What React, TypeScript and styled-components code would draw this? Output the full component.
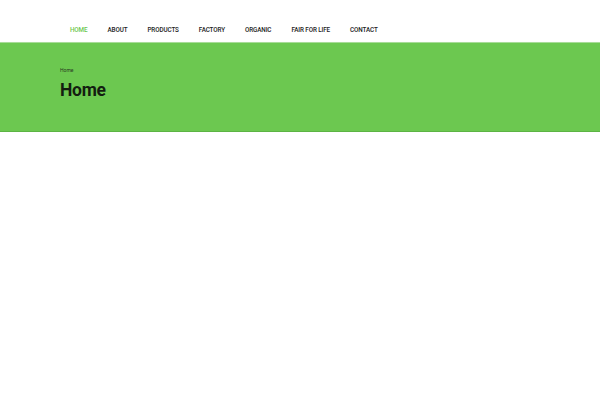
import styled, { createGlobalStyle } from "styled-components";

const GlobalStyle = createGlobalStyle`
  body {
    margin: 0;
    background: #ffffff;
    font-family: Roboto, "DejaVu Sans", sans-serif;
  }
`;

const Header = styled.header`
  height: 42px;
  background: #ffffff;
  display: flex;
  align-items: center;
  padding: 18px 0 0 70px;
  box-sizing: border-box;
`;

const NavMenu = styled.ul`
  display: flex;
  gap: 20px;
  list-style: none;
  margin: 0;
  padding: 0;
`;

const NavItem = styled.li<{ active?: boolean }>`
  font-size: 6.3px;
  font-weight: 500;
  letter-spacing: -0.1px;
  text-transform: uppercase;
  color: ${({ active }) => (active ? "#6cc850" : "#222222")};
  cursor: pointer;
`;

const TitleBar = styled.section`
  height: 90px;
  background: #6cc850;
  border-top: 1px solid #a8dc98;
  border-bottom: 1px solid #5cb444;
  box-shadow: 0 1px 2px rgba(108, 200, 80, 0.2);
  padding: 25px 60px 0;
  box-sizing: border-box;
`;

const Crumb = styled.div`
  font-size: 5px;
  color: #2a3a22;
  line-height: 1;
`;

const PageTitle = styled.h1`
  margin: 8px 0 0;
  font-size: 17.5px;
  font-weight: 700;
  letter-spacing: -0.3px;
  color: #141e10;
  line-height: 1.1;
`;

const items = ["Home", "About", "Products", "Factory", "Organic", "Fair for life", "Contact"];

const App = () => (
  <>
    <GlobalStyle />
    <Header>
      <NavMenu>
        {items.map((item, i) => (
          <NavItem key={item} active={i === 0}>
            {item}
          </NavItem>
        ))}
      </NavMenu>
    </Header>
    <TitleBar>
      <Crumb>Home</Crumb>
      <PageTitle>Home</PageTitle>
    </TitleBar>
  </>
);

export default App;
